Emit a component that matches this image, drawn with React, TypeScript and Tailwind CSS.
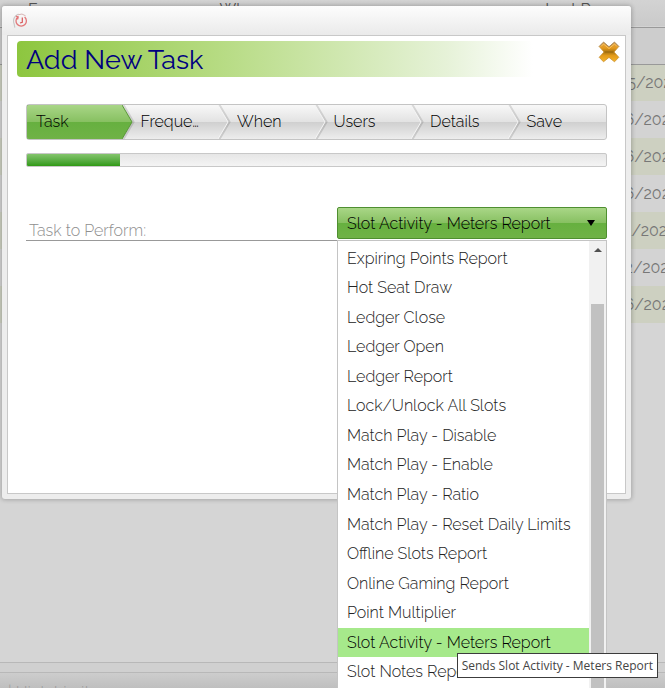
import { useState } from "react";

const steps = ["Task", "Freque…", "When", "Users", "Details", "Save"];

const tasks = [
  "Expiring Points Report",
  "Hot Seat Draw",
  "Ledger Close",
  "Ledger Open",
  "Ledger Report",
  "Lock/Unlock All Slots",
  "Match Play - Disable",
  "Match Play - Enable",
  "Match Play - Ratio",
  "Match Play - Reset Daily Limits",
  "Offline Slots Report",
  "Online Gaming Report",
  "Point Multiplier",
  "Slot Activity - Meters Report",
  "Slot Notes Report",
];

const lastRuns = [
  "02/05/2020",
  "02/16/2020",
  "02/16/2020",
  "02/16/2020",
  "02/11/2020",
  "02/12/2020",
  "02/16/2020",
];

const ScheduleTable = () => (
  <table className="w-full table-fixed border-collapse text-left text-[#555]">
    <colgroup>
      <col className="w-[33%]" />
      <col className="w-[49%]" />
      <col />
    </colgroup>
    <thead>
      <tr className="h-[27px] border-b border-[#999] bg-linear-to-b from-[#d3d3d3] to-[#cacaca] align-top leading-5">
        <th className="pl-7 font-normal">Frequency</th>
        <th className="font-normal">When</th>
        <th className="font-normal whitespace-nowrap">Last Run</th>
      </tr>
      <tr className="h-[37px] border-b border-[#999] bg-[#cdcdcd]">
        <td colSpan={3} />
      </tr>
    </thead>
    <tbody>
      {lastRuns.map((date, i) => (
        <tr key={i} className="h-[37px] odd:bg-[#cdd0c1] even:bg-[#d3d3d3]">
          <td />
          <td />
          <td className="overflow-hidden pl-[45px] font-normal whitespace-nowrap text-[#777]">
            {date}
          </td>
        </tr>
      ))}
    </tbody>
  </table>
);

const CloseIcon = () => (
  <svg viewBox="0 0 22 22" className="size-[22px]">
    <defs>
      <linearGradient id="gold" x1="0" y1="0" x2="0" y2="1">
        <stop offset="0" stopColor="#dfa045" />
        <stop offset="0.3" stopColor="#e59a1c" />
        <stop offset="0.5" stopColor="#a87412" />
        <stop offset="0.68" stopColor="#e39a18" />
        <stop offset="1" stopColor="#f5b52c" />
      </linearGradient>
    </defs>
    <path
      d="M5.5 1.2 11 5.8l5.5-4.6 4.3 4.3L16 11l4.8 5.3-4.3 4.5L11 16.4l-5.5 4.4-4.3-4.5L6 11 1.2 5.5Z"
      fill="url(#gold)"
      stroke="#c98f2e"
      strokeWidth="0.8"
      strokeLinejoin="round"
    />
    <path
      d="M1.2 5.5 5.5 1.2 11 5.8l5.5-4.6 4.3 4.3"
      fill="none"
      stroke="#a58a6a"
      strokeWidth="0.9"
      strokeLinejoin="round"
    />
    <path
      d="M3 5.5 5.5 3 11 7.6 16.5 3 19 5.5"
      fill="none"
      stroke="#f7c566"
      strokeWidth="0.9"
    />
    <path d="M7 11h8" stroke="#9c6c10" strokeWidth="1.6" strokeOpacity="0.7" />
  </svg>
);

const ClockIcon = () => (
  <svg viewBox="0 0 15 16" className="h-4 w-[15px]" fill="none">
    <path d="M5.5 1a7.4 7.4 0 0 0-4.3 10l.6 3.6" stroke="#c9c9c9" strokeWidth="1.2" />
    <path
      d="M4.8 4A5.2 5.2 0 1 0 11.6 4M3 3.2l2.2.8-.6 2.4"
      stroke="#e27779"
      strokeWidth="1.3"
    />
    <path d="M5 1.8a7 7 0 0 1 7.6 1" stroke="#d9b5b5" strokeWidth="1" />
    <path d="M9.3 4.6v4.6L7 10" stroke="#d9575a" strokeWidth="1.2" />
  </svg>
);

const StepArrow = ({ active }: { active: boolean }) => (
  <svg
    viewBox="0 0 14 34"
    preserveAspectRatio="none"
    className="absolute inset-y-0 -left-0.5 h-full w-3.5"
  >
    <defs>
      <linearGradient id="arrow-on" x1="0" y1="0" x2="0" y2="1">
        <stop offset="0" stopColor="#a9d687" />
        <stop offset="0.5" stopColor="#87c061" />
        <stop offset="0.5" stopColor="#66b03f" />
        <stop offset="1" stopColor="#70b247" />
      </linearGradient>
      <linearGradient id="arrow-off" x1="0" y1="0" x2="0" y2="1">
        <stop offset="0" stopColor="#f8f8f8" />
        <stop offset="0.5" stopColor="#e2e2e2" />
        <stop offset="0.5" stopColor="#cfcfcf" />
        <stop offset="1" stopColor="#ededed" />
      </linearGradient>
    </defs>
    <path d="M1 0 11 17 1 34" fill="none" stroke="#000" strokeOpacity="0.12" strokeWidth="3" />
    <path d="M-1 0H0L10 17 0 34H-1Z" fill={active ? "url(#arrow-on)" : "url(#arrow-off)"} />
    <path
      d="M0 0 10 17 0 34"
      fill="none"
      stroke={active ? "#5a9a38" : "#f5f5f5"}
      strokeWidth="1"
    />
  </svg>
);

const StepBar = () => (
  <ol className="grid h-9 grid-cols-6 overflow-hidden rounded-[3px] border border-[#c4c4c4] bg-[linear-gradient(#f8f8f8,#e2e2e2_50%,#cfcfcf_50%,#ededed)]">
    {steps.map((step, i) =>
      i === 0 ? (
        <li
          key={step}
          className="-my-px mr-0.5 -ml-px rounded-l-[3px] border border-r-0 border-[#4f8f30] bg-[linear-gradient(#a9d687,#87c061_50%,#66b03f_50%,#70b247)]"
        >
          <button type="button" className="h-full w-full pl-[9px] text-left">
            {step}
          </button>
        </li>
      ) : (
        <li key={step} className="relative">
          <StepArrow active={i === 1} />
          <button type="button" className="h-full w-full pl-[17px] text-left">
            {step}
          </button>
        </li>
      )
    )}
  </ol>
);

const TaskList = ({
  value,
  onSelect,
}: {
  value: string;
  onSelect: (task: string) => void;
}) => (
  <div className="absolute inset-x-0 top-full mt-px flex border border-[#c4c4c4] bg-white">
    <ul role="listbox" className="grid h-[450px] flex-1 auto-rows-fr pt-[3px] pb-1">
      {tasks.map((task) => (
        <li
          key={task}
          role="option"
          aria-selected={task === value}
          onClick={() => onSelect(task)}
          className="flex cursor-pointer items-center pl-[9px] whitespace-nowrap text-[#222] aria-selected:bg-[#a6e98b] aria-selected:text-black"
        >
          {task}
        </li>
      ))}
    </ul>
    <div className="flex w-[17px] flex-col items-center bg-[#f1f1f1]">
      <svg viewBox="0 0 8 4" className="mt-[7px] mb-[52px] h-1 w-2">
        <path d="M0 4 4 0l4 4Z" fill="#505050" />
      </svg>
      <div className="w-[13px] flex-1 bg-[#c1c1c1]" />
    </div>
    <div
      role="tooltip"
      className="absolute top-[412px] -right-[52px] border border-[#3c3c3c] bg-white px-1 font-['Open_Sans',sans-serif] text-xs leading-[23px] font-normal whitespace-nowrap text-[#444]"
    >
      Sends Slot Activity - Meters Report
    </div>
  </div>
);

const NewTaskDialog = () => {
  const [task, setTask] = useState("Slot Activity - Meters Report");

  return (
    <div
      role="dialog"
      aria-labelledby="dialog-title"
      className="absolute top-1.5 right-[34px] left-0.5 rounded-[3px] bg-[#ededed] px-[5px] pb-[5px] shadow-[0_0_4px_1px_rgba(0,0,0,0.22)]"
    >
      <div className="-mx-[5px] flex h-[29px] items-center rounded-t-[3px] bg-linear-to-b from-[#fdfdfd] to-[#eaeaea] pl-[11px]">
        <ClockIcon />
      </div>
      <div className="h-[459px] border border-[#c8c8c8] bg-white px-[9px] pt-[5px]">
        <div className="-mr-1 flex items-start">
          <h1
            id="dialog-title"
            className="h-9 flex-1 rounded-[4px] bg-[linear-gradient(90deg,#8dc63f,#b6db82_35%,#e6f2d8_75%,#fff_90%)] pl-[9px] text-[27px] leading-[38px] font-normal text-[#000080]"
          >
            Add New Task
          </h1>
          <button type="button" aria-label="Close" className="ml-2">
            <CloseIcon />
          </button>
        </div>

        <div className="mt-[27px] mr-[9px] ml-[9px]">
          <StepBar />
          <div className="mt-[13px] h-3.5 overflow-hidden rounded-[2px] border border-[#c8c8c8] bg-linear-to-b from-[#e6e6e6] to-[#f4f4f4]">
            <div className="h-full w-[16%] bg-linear-to-b from-[#83c46c] to-[#2f9a12]" />
          </div>

          <form className="mt-10 flex items-start">
            <label
              htmlFor="task"
              className="mt-3.5 flex-1 border-b border-[#999] pt-px pl-[3px] leading-[18px] text-[#8f8f8f]"
            >
              Task to Perform:
            </label>
            <div className="relative w-[270px]">
              <select
                id="task"
                value={task}
                onChange={(e) => setTask(e.target.value)}
                className="h-8 w-full appearance-none rounded-[2px] border border-[#4f8f30] bg-[linear-gradient(#a9d687,#87c061_50%,#66b03f_50%,#70b247)] pt-0.5 pl-[9px]"
              >
                {tasks.map((name) => (
                  <option key={name}>{name}</option>
                ))}
              </select>
              <svg
                viewBox="0 0 8 6"
                className="pointer-events-none absolute top-[13px] right-3 h-1.5 w-2"
              >
                <path d="M0 0h8L4 6Z" fill="#000" />
              </svg>
              <TaskList value={task} onSelect={setTask} />
            </div>
          </form>
        </div>
      </div>
    </div>
  );
};

export default function App() {
  return (
    <div className="relative flex h-screen flex-col overflow-hidden bg-[#d5d5d5] font-[Raleway,Lato,sans-serif] text-base font-light text-black">
      <ScheduleTable />
      <div className="flex-1" />
      <footer>
        <div className="h-[11px] border-y border-[#b8b8b8] bg-[#d0d0d0]" />
        <div className="h-[15px] overflow-hidden bg-linear-to-b from-[#cdcdcd] to-[#bfbfbf] pt-2 pl-2 text-[#999]">
          | High Limit
        </div>
      </footer>
      <NewTaskDialog />
    </div>
  );
}
